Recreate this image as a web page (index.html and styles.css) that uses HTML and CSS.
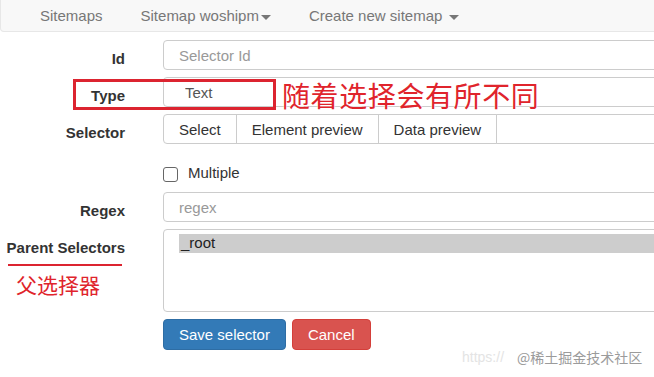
FILE: index.html
```html
<!DOCTYPE html>
<html lang="en">
<head>
    <meta charset="UTF-8">
    <title>Edit selector</title>
    <link rel="stylesheet" href="styles.css">
</head>
<body>

<!-- Top navigation -->
<div class="navbar">
    <ul class="nav">
        <li><a>Sitemaps</a></li>
        <li><a>Sitemap woshipm<span class="caret"></span></a></li>
        <li><a>Create new sitemap <span class="caret"></span></a></li>
    </ul>
</div>

<!-- Selector form -->
<form class="form">
    <div class="row">
        <label class="label" for="selectorId">Id</label>
        <div class="field">
            <input type="text" id="selectorId" class="control" placeholder="Selector Id">
        </div>
    </div>
    <div class="row">
        <label class="label" for="type">Type</label>
        <div class="field">
            <select id="type" class="control select">
                <option>Text</option>
            </select>
        </div>
    </div>
    <div class="row">
        <label class="label">Selector</label>
        <div class="field group">
            <button type="button" class="btn">Select</button>
            <button type="button" class="btn">Element preview</button>
            <button type="button" class="btn">Data preview</button>
            <input type="text" class="control group-input">
        </div>
    </div>
    <div class="row check-row">
        <div class="label"></div>
        <label class="field check">
            <span class="box"></span>
            Multiple
        </label>
    </div>
    <div class="row">
        <label class="label" for="regex">Regex</label>
        <div class="field">
            <input type="text" id="regex" class="control" placeholder="regex">
        </div>
    </div>
    <div class="row">
        <label class="label">Parent Selectors</label>
        <div class="field">
            <div class="listbox">
                <div class="option selected">_root</div>
            </div>
        </div>
    </div>
    <div class="row">
        <div class="label"></div>
        <div class="field actions">
            <button type="button" class="btn btn-primary">Save selector</button>
            <button type="button" class="btn btn-danger">Cancel</button>
        </div>
    </div>
</form>

<!-- Annotations drawn over the screenshot -->
<div class="mark-box"></div>
<div class="mark-text">随着选择会有所不同</div>
<div class="mark-line"></div>
<div class="mark-small">父选择器</div>

<div class="watermark">
    <span class="wm-url">https://</span>
    <span class="wm-name">@稀土掘金技术社区</span>
</div>

</body>
</html>
```

FILE: styles.css
```css
body {
    margin: 0;
    width: 654px;
    height: 377px;
    overflow: hidden;
    position: relative;
    background: #fff;
    font-family: "Liberation Sans", Arial, "Noto Sans CJK SC", sans-serif;
    font-size: 15px;
    color: #333;
}

/* navbar */
.navbar {
    height: 31px;
    width: 700px;
    background-color: #f8f8f8;
    border: 1px solid #e7e7e7;
    border-top: none;
    border-radius: 0 0 4px 4px;
}

.nav {
    list-style: none;
    margin: 0 0 0 20px;
    padding: 0;
    display: flex;
}

.nav a {
    display: block;
    padding: 0 19px;
    line-height: 31px;
    color: #777;
}

.caret {
    display: inline-block;
    width: 0;
    height: 0;
    margin-left: 2px;
    vertical-align: middle;
    border-top: 5px solid #777;
    border-left: 5px solid transparent;
    border-right: 5px solid transparent;
}

/* form */
.form {
    display: flex;
    flex-direction: column;
    gap: 7px;
    margin-top: 8px;
    width: 720px;
}

.row {
    display: flex;
}

.label {
    width: 125px;
    flex: none;
    margin-right: 38px;
    padding-top: 9px;
    text-align: right;
    font-size: 15px;
    font-weight: bold;
    line-height: 20px;
    color: #333;
}

.field {
    flex: 1;
}

.control {
    display: block;
    box-sizing: border-box;
    width: 100%;
    height: 30px;
    padding: 0 15px;
    border: 1px solid #ccc;
    border-radius: 4px;
    background: #fff;
    font-family: inherit;
    font-size: 15px;
    color: #555;
    outline: none;
}

.control::placeholder {
    color: #999;
}

.select {
    appearance: none;
    padding-left: 21px;
}

/* button group with the selector input */
.group {
    display: flex;
}

.btn {
    height: 30px;
    padding: 0 15px;
    border: 1px solid #ccc;
    background: #fff;
    font-family: inherit;
    font-size: 15px;
    color: #333;
    cursor: pointer;
}

.group .btn {
    margin-right: -1px;
}

.group .btn:first-child {
    border-radius: 4px 0 0 4px;
}

.group-input {
    flex: 1;
    border-radius: 0 4px 4px 0;
}

.check-row {
    height: 34px;
}

.check {
    display: flex;
    align-items: center;
    gap: 10px;
    padding-top: 13px;
    height: 16px;
    color: #333;
}

.box {
    width: 13px;
    height: 13px;
    border: 1px solid #666;
    border-radius: 3px;
    margin-top: 5px;
}

.listbox {
    box-sizing: border-box;
    height: 83px;
    padding: 4px 0 0 15px;
    border: 1px solid #ccc;
    border-radius: 4px;
}

.option {
    height: 19px;
    line-height: 18px;
    padding-left: 2px;
    color: #222;
}

.option.selected {
    background-color: #cdcdcd;
}

.actions {
    display: flex;
    gap: 6px;
}

.actions .btn {
    height: 31px;
    border-radius: 4px;
    color: #fff;
}

.btn-primary {
    background-color: #337ab7;
    border-color: #2e6da4;
}

.btn-danger {
    background-color: #d9534f;
    border-color: #d43f3a;
}

/* red annotations */
.mark-box {
    position: absolute;
    left: 73px;
    top: 79px;
    width: 197px;
    height: 25px;
    border: 3px solid #dc2430;
}

.mark-text {
    position: absolute;
    left: 282px;
    top: 81px;
    font-family: "Noto Sans CJK SC", sans-serif;
    font-size: 28px;
    letter-spacing: 0.6px;
    line-height: 1;
    color: #e0242c;
    text-shadow: 0 0 2px #fff, 0 0 2px #fff;
}

.mark-line {
    position: absolute;
    left: 8px;
    top: 264px;
    width: 114px;
    height: 2px;
    background-color: #dc2430;
}

.mark-small {
    position: absolute;
    left: 16px;
    top: 274px;
    font-family: "Noto Sans CJK SC", sans-serif;
    font-size: 21px;
    line-height: 1;
    color: #e0242c;
}

/* watermark */
.watermark {
    position: absolute;
    left: 462px;
    top: 349px;
    font-size: 14px;
    line-height: 16px;
}

.wm-url {
    color: #e4e4e4;
}

.wm-name {
    position: absolute;
    left: 55px;
    top: 0;
    white-space: nowrap;
    font-family: "Noto Sans CJK SC", sans-serif;
    color: #9b9b9b;
}
```
